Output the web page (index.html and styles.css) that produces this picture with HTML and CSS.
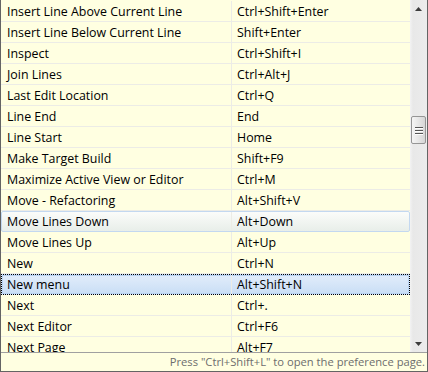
FILE: index.html
```html
<!DOCTYPE html>
<html>
<head>
<meta charset="utf-8">
<link rel="stylesheet" href="styles.css">
</head>
<body>
<div class="panel">
  <div class="main">
    <div class="list">
      <div class="row"><div class="name">Insert Line Above Current Line</div><div class="key">Ctrl+Shift+Enter</div></div>
      <div class="row"><div class="name">Insert Line Below Current Line</div><div class="key">Shift+Enter</div></div>
      <div class="row"><div class="name">Inspect</div><div class="key">Ctrl+Shift+I</div></div>
      <div class="row"><div class="name">Join Lines</div><div class="key">Ctrl+Alt+J</div></div>
      <div class="row"><div class="name">Last Edit Location</div><div class="key">Ctrl+Q</div></div>
      <div class="row"><div class="name">Line End</div><div class="key">End</div></div>
      <div class="row"><div class="name">Line Start</div><div class="key">Home</div></div>
      <div class="row"><div class="name">Make Target Build</div><div class="key">Shift+F9</div></div>
      <div class="row"><div class="name">Maximize Active View or Editor</div><div class="key">Ctrl+M</div></div>
      <div class="row"><div class="name">Move - Refactoring</div><div class="key">Alt+Shift+V</div></div>
      <div class="row hover"><div class="name">Move Lines Down</div><div class="key">Alt+Down</div></div>
      <div class="row"><div class="name">Move Lines Up</div><div class="key">Alt+Up</div></div>
      <div class="row"><div class="name">New</div><div class="key">Ctrl+N</div></div>
      <div class="row selected"><div class="name">New menu</div><div class="key">Alt+Shift+N</div></div>
      <div class="row"><div class="name">Next</div><div class="key">Ctrl+.</div></div>
      <div class="row"><div class="name">Next Editor</div><div class="key">Ctrl+F6</div></div>
      <div class="row last"><div class="name">Next Page</div><div class="key">Alt+F7</div></div>
    </div>
    <div class="scrollbar">
      <div class="sb-btn">
        <svg width="7" height="4" viewBox="0 0 7 4"><polygon points="3.5,0 7,4 0,4" fill="#3c3c3c"/></svg>
      </div>
      <div class="thumb">
        <div class="grip"></div><div class="grip"></div><div class="grip"></div>
      </div>
      <div class="sb-spacer"></div>
      <div class="sb-btn">
        <svg width="7" height="4" viewBox="0 0 7 4"><polygon points="0,0 7,0 3.5,4" fill="#3c3c3c"/></svg>
      </div>
    </div>
  </div>
  <div class="status">Press "Ctrl+Shift+L" to open the preference page.</div>
</div>
</body>
</html>
```
FILE: styles.css
```css
* { box-sizing: border-box; }
html, body { margin: 0; padding: 0; }
body {
  width: 428px;
  height: 372px;
  overflow: hidden;
  background: #ffffff;
  font-family: "Open Sans", "Noto Sans", sans-serif;
  font-size: 12.4px;
  color: #000;
}
.panel {
  width: 428px;
  height: 372px;
  border: 1px solid #646464;
  border-top: none;
  display: flex;
  flex-direction: column;
  background: #ffffe1;
}
.main {
  flex: 0 0 352px;
  display: flex;
  overflow: hidden;
}
.list {
  flex: 1;
  padding-top: 1px;
  overflow: hidden;
}
.row {
  display: flex;
  height: 21px;
  border-bottom: 1px solid #ecece6;
  white-space: nowrap;
}
.row.last { height: 17px; border-bottom: none; overflow: hidden; }
.name {
  width: 231px;
  padding-left: 6px;
  padding-top: 1px;
  border-right: 1px solid #ecece6;
  line-height: 20px;
}
.key {
  flex: 1;
  padding-left: 5px;
  padding-top: 1px;
  line-height: 20px;
}
.row.hover {
  border: 1px solid #c3d8f0;
  border-radius: 2px;
  background: linear-gradient(to bottom, #fbfcfa, #e8eee9);
}
.row.hover .name,
.row.selected .name { width: 230px; padding-left: 5px; padding-top: 0; }
.row.hover .key,
.row.selected .key { padding-top: 0; }
.row.selected {
  border: 1px dotted #000;
  background: linear-gradient(to bottom, #e2edfb, #c9def5);
  box-shadow: inset 0 0 0 1px #b9d3f2;
}
.scrollbar {
  flex: 0 0 17px;
  display: flex;
  flex-direction: column;
  align-items: center;
  background: linear-gradient(to right, #f3f3f3, #e8e8e8 3px, #ececec);
}
.sb-btn {
  flex: 0 0 17px;
  width: 17px;
  display: flex;
  align-items: center;
  justify-content: center;
}
.sb-btn svg { display: block; }
.thumb {
  margin-top: 99px;
  width: 15px;
  height: 28px;
  border: 1px solid #959595;
  border-radius: 2px;
  background: linear-gradient(to right, #f5f5f5, #e6e6e6 50%, #d6d6d6);
  display: flex;
  flex-direction: column;
  align-items: center;
  justify-content: center;
  gap: 2px;
}
.grip {
  width: 8px;
  height: 1px;
  background: #555;
  box-shadow: 0 1px 0 #ffffff;
}
.sb-spacer { flex: 1; }
.status {
  flex: 0 0 19px;
  border-top: 1px solid #a0a0a0;
  text-align: right;
  padding-right: 2px;
  font-size: 11.2px;
  line-height: 17px;
  color: #6d6d6d;
  white-space: nowrap;
}
```
